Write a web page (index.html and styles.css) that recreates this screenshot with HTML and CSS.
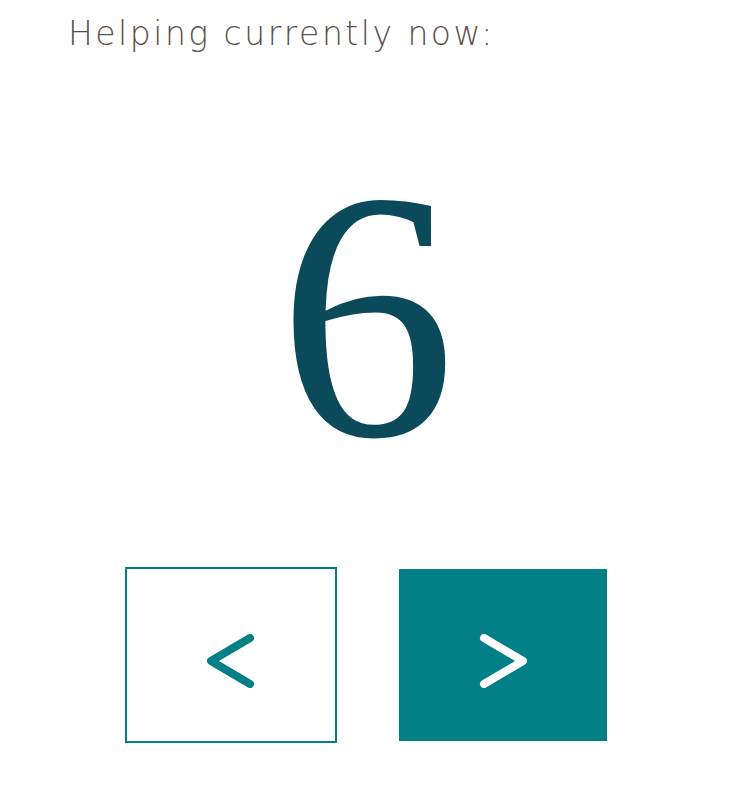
FILE: index.html
```html
<!DOCTYPE html>
<html>
<head>
<meta charset="utf-8">
<link rel="stylesheet" href="styles.css">
</head>
<body>
<main class="page">
  <h1 class="title">Helping currently now:</h1>
  <div class="count">6</div>
  <div class="controls">
    <button class="btn btn-prev" aria-label="previous">
      <svg class="chev" width="48" height="54" viewBox="0 0 48 54"><polyline points="43,4 4,27 43,50" fill="none" stroke="#037f88" stroke-width="8" stroke-linecap="round" stroke-linejoin="round"/></svg>
    </button>
    <button class="btn btn-next" aria-label="next">
      <svg class="chev" width="48" height="54" viewBox="0 0 48 54"><polyline points="5,4 44,27 5,50" fill="none" stroke="#ffffff" stroke-width="8" stroke-linecap="round" stroke-linejoin="round"/></svg>
    </button>
  </div>
</main>
</body>
</html>
```
FILE: styles.css
```css
html, body {
  margin: 0;
  padding: 0;
  background: #ffffff;
}
.page {
  width: 734px;
  height: 794px;
  display: flex;
  flex-direction: column;
}
.title {
  margin: 0;
  padding: 12px 0 0 68px;
  font-family: "DejaVu Sans", sans-serif;
  font-weight: 200;
  font-size: 33px;
  letter-spacing: 2.5px;
  line-height: 44px;
  color: #5b4f4a;
}
.count {
  margin-top: 110px;
  text-align: center;
  font-family: "Liberation Serif", serif;
  font-size: 355px;
  line-height: 300px;
  height: 300px;
  color: #0b4a5a;
}
.controls {
  margin-top: 101px;
  padding-right: 2px;
  display: flex;
  justify-content: center;
  align-items: center;
  gap: 62px;
}
.btn {
  box-sizing: border-box;
  display: flex;
  align-items: center;
  justify-content: center;
  padding: 0;
  cursor: pointer;
}
.chev {
  margin-top: 12px;
}
.btn-prev {
  width: 212px;
  height: 176px;
  border: 2px solid #037f88;
  background: #ffffff;
}
.btn-next {
  width: 208px;
  height: 172px;
  border: none;
  background: #037f88;
}
```
